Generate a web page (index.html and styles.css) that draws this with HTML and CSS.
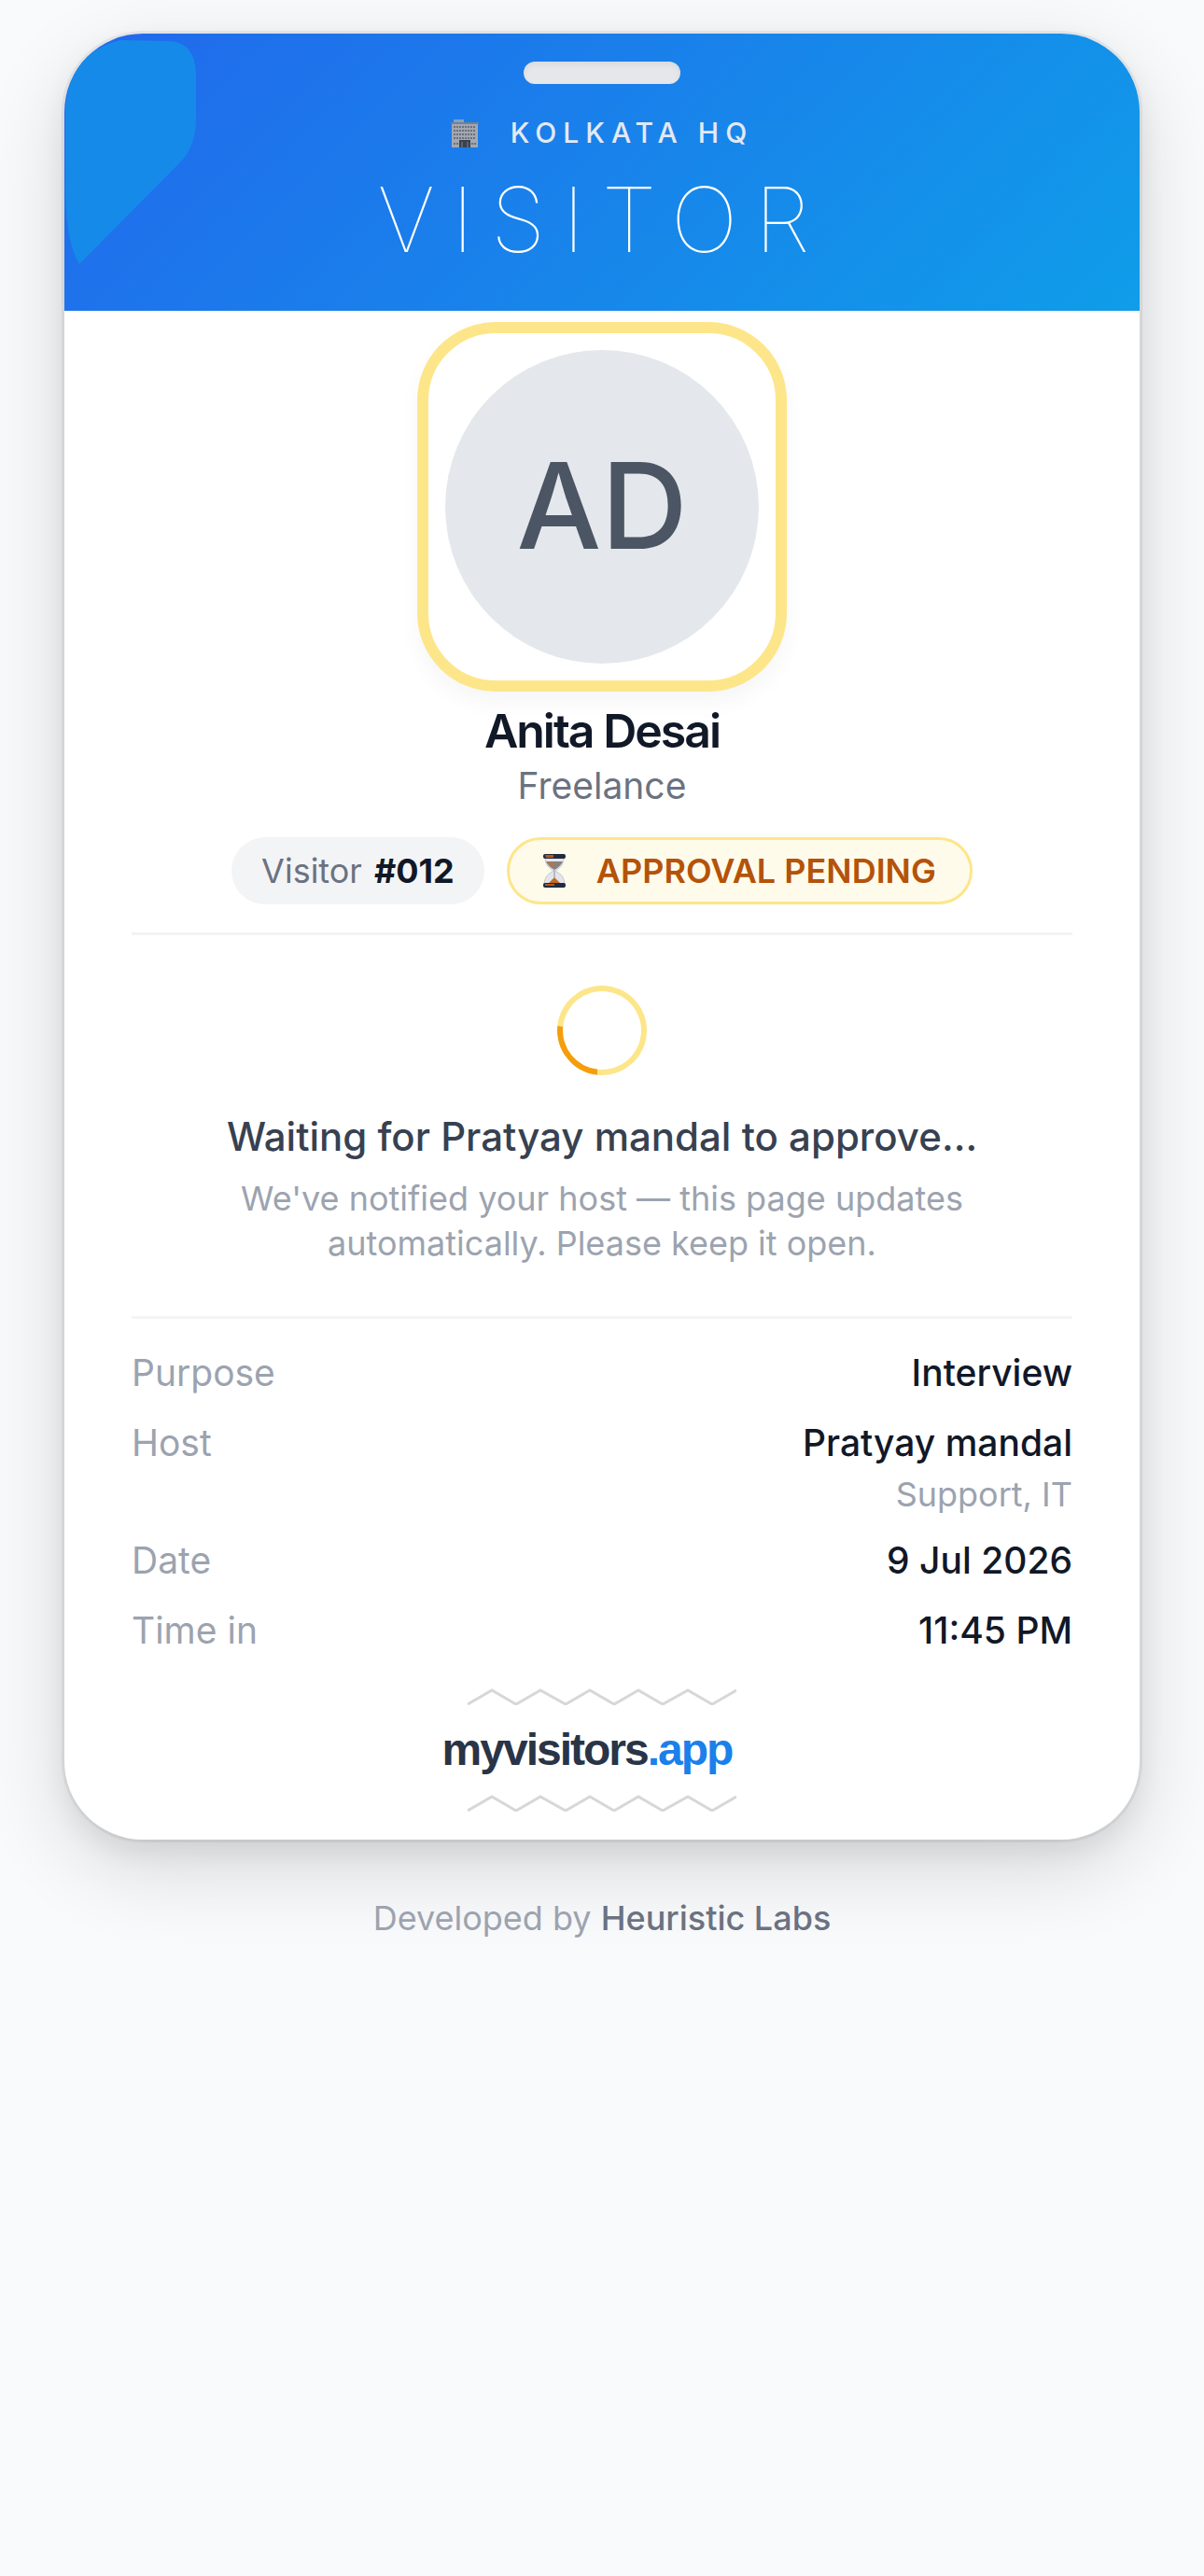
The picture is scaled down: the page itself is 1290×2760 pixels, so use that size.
FILE: index.html
```html
<!DOCTYPE html>
<html lang="en">
<head>
    <meta charset="UTF-8">
    <meta name="viewport" content="width=device-width, initial-scale=1.0">
    <title>Visitor Pass</title>
    <link rel="stylesheet" href="styles.css">
</head>
<body>
    <main class="card">
        <header class="card-header">
            <svg class="header-shape" width="144" height="250" viewBox="0 0 144 250" aria-hidden="true">
                <path d="M16 247L122 140Q141 122 141 92V44Q140 9 112 8L60 7Q6 20 1 80V170Q2 225 16 247Z" fill="#168ae9"/>
            </svg>
            <div class="slot"></div>
            <div class="site">
                <svg class="icon-building" width="30" height="30" viewBox="0 0 30 30" aria-hidden="true">
                    <path d="M3 0h11v3H3z" fill="#7fa3c4"/>
                    <path d="M1 3h28v27H1z" fill="#a3a7b0"/>
                    <path d="M0 3h30v2H0z" fill="#6f8296"/>
                    <path d="M3 8h24M3 12h24M3 16h24M3 20h24M3 26h5M22 26h5" stroke="#6a717d" stroke-width="2" stroke-dasharray="2 1"/>
                    <path d="M9 22h12v8H9z" fill="#39414f"/>
                    <path d="M12 24v6M18 24v6" stroke="#7d8794"/>
                </svg>
                <span>KOLKATA HQ</span>
            </div>
            <h1 class="title">VISITOR</h1>
        </header>

        <div class="card-body">
            <div class="photo">
                <div class="initials">AD</div>
            </div>
            <h2 class="name">Anita Desai</h2>
            <p class="company">Freelance</p>
            <div class="badges">
                <span class="badge badge-number">Visitor <strong>#012</strong></span>
                <span class="badge badge-pending">
                    <svg class="icon-hourglass" width="24" height="36" viewBox="0 0 24 36" aria-hidden="true">
                        <path d="M2 4Q2 13 10 17V19Q2 22 1 32H23Q22 22 14 19V17Q22 13 22 4Z" fill="#e3e5ea" stroke="#c3c7cf"/>
                        <path d="M3 8H21Q19 13 12 17Q5 13 3 8Z" fill="#8b7f7c"/>
                        <path d="M5 9h6v3H7z" fill="#b8763f"/>
                        <path d="M12 17v8" stroke="#8d8f97"/>
                        <path d="M12 25L18 31H6Z" fill="#bd6a2b"/>
                        <rect width="24" height="5" rx="2" fill="#222b3c"/>
                        <rect y="31" width="24" height="5" rx="2" fill="#222b3c"/>
                        <path d="M2 1h9v3H3zM2 32h10v2H2z" fill="#b5561a"/>
                    </svg>
                    <span>APPROVAL PENDING</span>
                </span>
            </div>

            <section class="waiting">
                <div class="spinner"></div>
                <p class="waiting-title">Waiting for Pratyay mandal to approve…</p>
                <p class="waiting-text">We've notified your host — this page updates automatically. Please keep it open.</p>
            </section>

            <dl class="details">
                <div class="row">
                    <dt>Purpose</dt>
                    <dd>Interview</dd>
                </div>
                <div class="row">
                    <dt>Host</dt>
                    <dd>Pratyay mandal<span class="sub">Support, IT</span></dd>
                </div>
                <div class="row">
                    <dt>Date</dt>
                    <dd>9 Jul 2026</dd>
                </div>
                <div class="row">
                    <dt>Time in</dt>
                    <dd>11:45 PM</dd>
                </div>
            </dl>

            <div class="brand">
                <svg class="zigzag" width="288" height="18" viewBox="0 0 288 18" aria-hidden="true">
                    <path d="M0 17L26 2L52 17L78 2L105 17L131 2L157 17L183 2L209 17L236 2L262 17L288 2"/>
                </svg>
                <div class="logo">myvisitors<span>.app</span></div>
                <svg class="zigzag" width="288" height="18" viewBox="0 0 288 18" aria-hidden="true">
                    <path d="M0 17L26 2L52 17L78 2L105 17L131 2L157 17L183 2L209 17L236 2L262 17L288 2"/>
                </svg>
            </div>
        </div>
    </main>

    <footer class="footer">Developed by <strong>Heuristic Labs</strong></footer>
</body>
</html>
```
FILE: styles.css
```css
* {
    box-sizing: border-box;
}
body {
    font-family: Inter, sans-serif;
    margin: 0;
    padding: 36px 24px;
    min-height: 100vh;
    color: #111827;
    background-color: #f9fafc;
}
h1, h2, p, dl, dd {
    margin: 0;
}
.card {
    max-width: 1152px;
    margin: 0 auto;
    background-color: white;
    border-radius: 84px;
    box-shadow: 0 0 0 3px rgba(0, 0, 0, 0.05), 0 12px 30px rgba(0, 0, 0, 0.07), 0 30px 90px rgba(0, 0, 0, 0.14);
}
.card-header {
    position: relative;
    display: flex;
    flex-direction: column;
    align-items: center;
    padding: 30px 72px 50px;
    border-radius: 84px 84px 0 0;
    overflow: hidden;
    background: linear-gradient(135deg, #2268ec, #0f9de9);
    color: white;
}
.header-shape {
    position: absolute;
    top: 0;
    left: 0;
}
.slot {
    width: 168px;
    height: 24px;
    border-radius: 12px;
    background-color: #e5e7eb;
    box-shadow: inset 0 3px 6px rgba(0, 0, 0, 0.06);
}
.site {
    display: flex;
    align-items: center;
    gap: 34px;
    margin-top: 30px;
    font-size: 30px;
    font-weight: 500;
    line-height: 45px;
    letter-spacing: 7px;
    color: #e3e9f3;
}
.title {
    font-size: 96px;
    font-weight: 100;
    line-height: 96px;
    letter-spacing: 18px;
    margin-top: 22px;
}
.card-body {
    padding: 12px 72px 30px;
    text-align: center;
}
.photo {
    width: 396px;
    margin: 0 auto;
    padding: 18px;
    border: 12px solid #fde68a;
    border-radius: 84px;
    background-color: white;
    box-shadow: 0 12px 24px rgba(15, 23, 42, 0.04);
}
.initials {
    height: 336px;
    border-radius: 50%;
    background-color: #e4e8ec;
    color: #4b5563;
    font-size: 128px;
    font-weight: 500;
    line-height: 334px;
}
.name {
    margin-top: 12px;
    font-size: 50px;
    font-weight: 600;
    line-height: 60px;
    letter-spacing: -2px;
}
.company {
    font-size: 39px;
    line-height: 57px;
    color: #6b7280;
}
.badges {
    display: flex;
    justify-content: center;
    gap: 24px;
    margin-top: 27px;
    padding-bottom: 30px;
    border-bottom: 3px solid #f3f4f6;
}
.badge {
    display: flex;
    align-items: center;
    height: 72px;
    border-radius: 36px;
    font-size: 36px;
}
.badge-number {
    gap: 13px;
    padding: 0 32px;
    background-color: #f3f4f6;
    color: #6b7280;
}
.badge-number strong {
    color: #111827;
    font-weight: 700;
}
.badge-pending {
    gap: 33px;
    padding: 0 36px;
    border: 3px solid #fde68a;
    background-color: #fffbeb;
    color: #b45309;
    font-weight: 600;
}
.waiting {
    padding: 54px 48px;
    border-bottom: 3px solid #f3f4f6;
}
.spinner {
    width: 96px;
    height: 96px;
    margin: 0 auto;
    border: 6px solid #fde68a;
    border-top-color: #f59e0b;
    border-radius: 50%;
    transform: rotate(231deg);
}
.waiting-title {
    margin-top: 36px;
    font-size: 42px;
    font-weight: 500;
    line-height: 60px;
    color: #374151;
}
.waiting-text {
    margin-top: 12px;
    font-size: 36px;
    line-height: 48px;
    color: #9ca3af;
}
.details {
    padding-top: 29px;
    font-size: 39px;
    line-height: 57px;
}
.row {
    display: flex;
    justify-content: space-between;
    margin-bottom: 18px;
}
.row dt {
    color: #9ca3af;
}
.row dd {
    font-weight: 500;
    text-align: right;
}
.sub {
    display: block;
    margin-top: 3px;
    font-size: 36px;
    font-weight: 400;
    line-height: 48px;
    color: #9ca3af;
}
.brand {
    display: flex;
    flex-direction: column;
    align-items: center;
    gap: 18px;
    margin-top: 34px;
}
.zigzag {
    fill: none;
    stroke: #d6d7d9;
    stroke-width: 3;
}
.logo {
    padding-right: 32px;
    font-family: "Liberation Sans", Arial, sans-serif;
    font-size: 48px;
    font-weight: 700;
    line-height: 60px;
    letter-spacing: -2px;
    color: #293447;
}
.logo span {
    color: #1b80ea;
}
.footer {
    margin-top: 57px;
    font-size: 36px;
    line-height: 54px;
    text-align: center;
    color: #9ca3af;
}
.footer strong {
    font-weight: 500;
    color: #6b7280;
}
```
